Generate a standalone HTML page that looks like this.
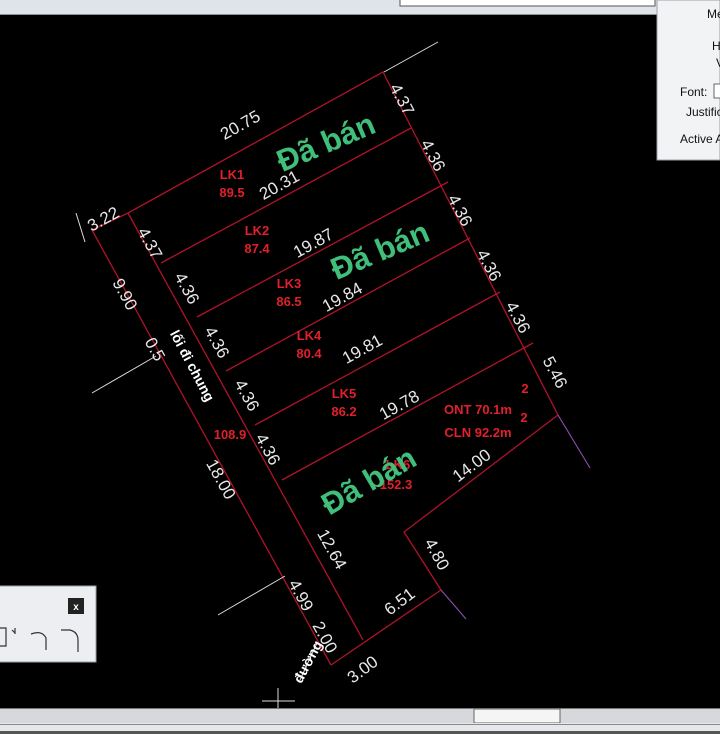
<!DOCTYPE html>
<html><head><meta charset="utf-8"><style>
html,body{margin:0;padding:0;background:#000;width:720px;height:734px;overflow:hidden}
svg{display:block}
</style></head><body>
<svg width="720" height="734" viewBox="0 0 720 734" xmlns="http://www.w3.org/2000/svg" font-family="Liberation Sans, DejaVu Sans, sans-serif">
<rect width="720" height="734" fill="#000"/>
<rect x="0" y="0" width="660" height="14" fill="#dfe3ea"/>
<rect x="400" y="-2" width="255" height="8" fill="#fff" stroke="#555" stroke-width="1"/>
<line x1="0" y1="14.5" x2="660" y2="14.5" stroke="#8a8f96"/>
<rect x="657" y="0" width="63" height="160" fill="#f2f3f5" stroke="#9aa0a8"/>
<g font-size="12" fill="#111">
<text x="707" y="18">Me</text>
<text x="712" y="50">H</text>
<text x="716" y="67">V</text>
<text x="680" y="96">Font:</text>
<rect x="714" y="84" width="10" height="14" fill="#fff" stroke="#666"/>
<text x="686" y="116">Justific</text>
<text x="680" y="143">Active A</text>
</g>
<g stroke="#b0122a" stroke-width="1.3" fill="none">
<polyline points="92,230 128,213 383,72 558,415"/>
<line x1="92" y1="230" x2="331" y2="665"/>
<line x1="128" y1="213" x2="363" y2="640"/>
<polyline points="331,665 441,590 404,532 558,415"/>
<line x1="161" y1="263" x2="411" y2="128"/>
<line x1="197" y1="317" x2="448" y2="182"/>
<line x1="226" y1="371" x2="470" y2="238"/>
<line x1="255" y1="425" x2="500" y2="292"/>
<line x1="282" y1="480" x2="533" y2="343"/>
</g>
<g stroke="#8a4aa8" stroke-width="1.2"><line x1="558" y1="415" x2="590" y2="468"/><line x1="441" y1="590" x2="466" y2="619"/></g>
<g stroke="#ddd" stroke-width="1">
<line x1="384" y1="72" x2="438" y2="42"/>
<line x1="92" y1="393" x2="156" y2="356"/>
<line x1="218" y1="615" x2="285" y2="576"/>
<line x1="262" y1="701" x2="295" y2="701"/><line x1="278" y1="688" x2="278" y2="708"/>
<line x1="317" y1="643" x2="300" y2="680"/>
<line x1="76" y1="213" x2="85" y2="242"/>
</g>
<g fill="#e8e8e8" font-size="17" font-family="Liberation Sans Narrow, Liberation Sans, sans-serif" text-anchor="middle">
<text transform="translate(243,130) rotate(-29)">20.75</text>
<text transform="translate(282,190) rotate(-29)">20.31</text>
<text transform="translate(316,248) rotate(-29)">19.87</text>
<text transform="translate(345,302) rotate(-29)">19.84</text>
<text transform="translate(365,354) rotate(-29)">19.81</text>
<text transform="translate(402,410) rotate(-29)">19.78</text>
<text transform="translate(475,470) rotate(-37)">14.00</text>
<text transform="translate(403,606) rotate(-37)">6.51</text>
<text transform="translate(366,674) rotate(-37)">3.00</text>
<text transform="translate(106,224) rotate(-29)">3.22</text>
<text transform="translate(397,102) rotate(62)">4.37</text>
<text transform="translate(428,158) rotate(62)">4.36</text>
<text transform="translate(455,213) rotate(62)">4.36</text>
<text transform="translate(484,268) rotate(62)">4.36</text>
<text transform="translate(513,320) rotate(62)">4.36</text>
<text transform="translate(550,375) rotate(62)">5.46</text>
<text transform="translate(145,246) rotate(61)">4.37</text>
<text transform="translate(182,291) rotate(61)">4.36</text>
<text transform="translate(212,345) rotate(61)">4.36</text>
<text transform="translate(242,398) rotate(61)">4.36</text>
<text transform="translate(263,452) rotate(61)">4.36</text>
<text transform="translate(120,297) rotate(61)">9.90</text>
<text transform="translate(150,352) rotate(61)">0.5</text>
<text transform="translate(216,482) rotate(61)">18.00</text>
<text transform="translate(327,552) rotate(61)">12.64</text>
<text transform="translate(296,598) rotate(61)">4.99</text>
<text transform="translate(320,640) rotate(61)">2.00</text>
<text transform="translate(432,557) rotate(61)">4.80</text>
</g>
<g fill="#fff" font-size="14" font-weight="bold" text-anchor="middle">
<text transform="translate(188,368) rotate(62)">lối đi chung</text>
<text transform="translate(312,664) rotate(-62)">đường</text>
</g>
<g fill="#e0202a" font-size="13" font-weight="bold" font-family="Liberation Sans Narrow, Liberation Sans, sans-serif" text-anchor="middle">
<text x="232" y="179">LK1</text><text x="232" y="197">89.5</text>
<text x="257" y="235">LK2</text><text x="257" y="253">87.4</text>
<text x="289" y="288">LK3</text><text x="289" y="306">86.5</text>
<text x="309" y="340">LK4</text><text x="309" y="358">80.4</text>
<text x="344" y="398">LK5</text><text x="344" y="416">86.2</text>
<text x="230" y="439">108.9</text>
<text x="398" y="469">LK6</text><text x="396" y="489">152.3</text>
<text x="478" y="414">ONT 70.1m</text><text x="478" y="437">CLN 92.2m</text>
<text x="525" y="393">2</text><text x="524" y="422">2</text>
</g>
<g fill="#3fbf7a" font-size="31" font-weight="bold" text-anchor="middle">
<text transform="translate(330,152) rotate(-23)">Đã bán</text>
<text transform="translate(384,260) rotate(-23)">Đã bán</text>
<text transform="translate(374,490) rotate(-30)">Đã bán</text>
</g>
<rect x="-1" y="586" width="97" height="76" fill="#eceef1" stroke="#9aa0a8"/>
<rect x="68" y="598" width="16" height="16" fill="#222"/>
<text x="76" y="610" fill="#fff" font-size="10" font-weight="bold" text-anchor="middle">x</text>
<g stroke="#333" stroke-width="1.2" fill="none">
<path d="M0 628 H6 V646 H0"/><path d="M12 630 l3 3 M15 628 v6"/>
<path d="M31 634 Q42 630 46 638 V650"/><path d="M61 630 H70 Q78 632 78 640 V652"/>
</g>
<rect x="0" y="708" width="720" height="15" fill="#d6d8dc"/>
<line x1="0" y1="708.5" x2="720" y2="708.5" stroke="#777"/>
<rect x="474" y="709" width="86" height="14" fill="#f5f5f5" stroke="#666"/>
<rect x="0" y="723" width="720" height="11" fill="#e6e8ec"/>
<line x1="0" y1="724.5" x2="720" y2="724.5" stroke="#888"/>
<rect x="0" y="731" width="720" height="3" fill="#555"/>
</svg>
</body></html>
